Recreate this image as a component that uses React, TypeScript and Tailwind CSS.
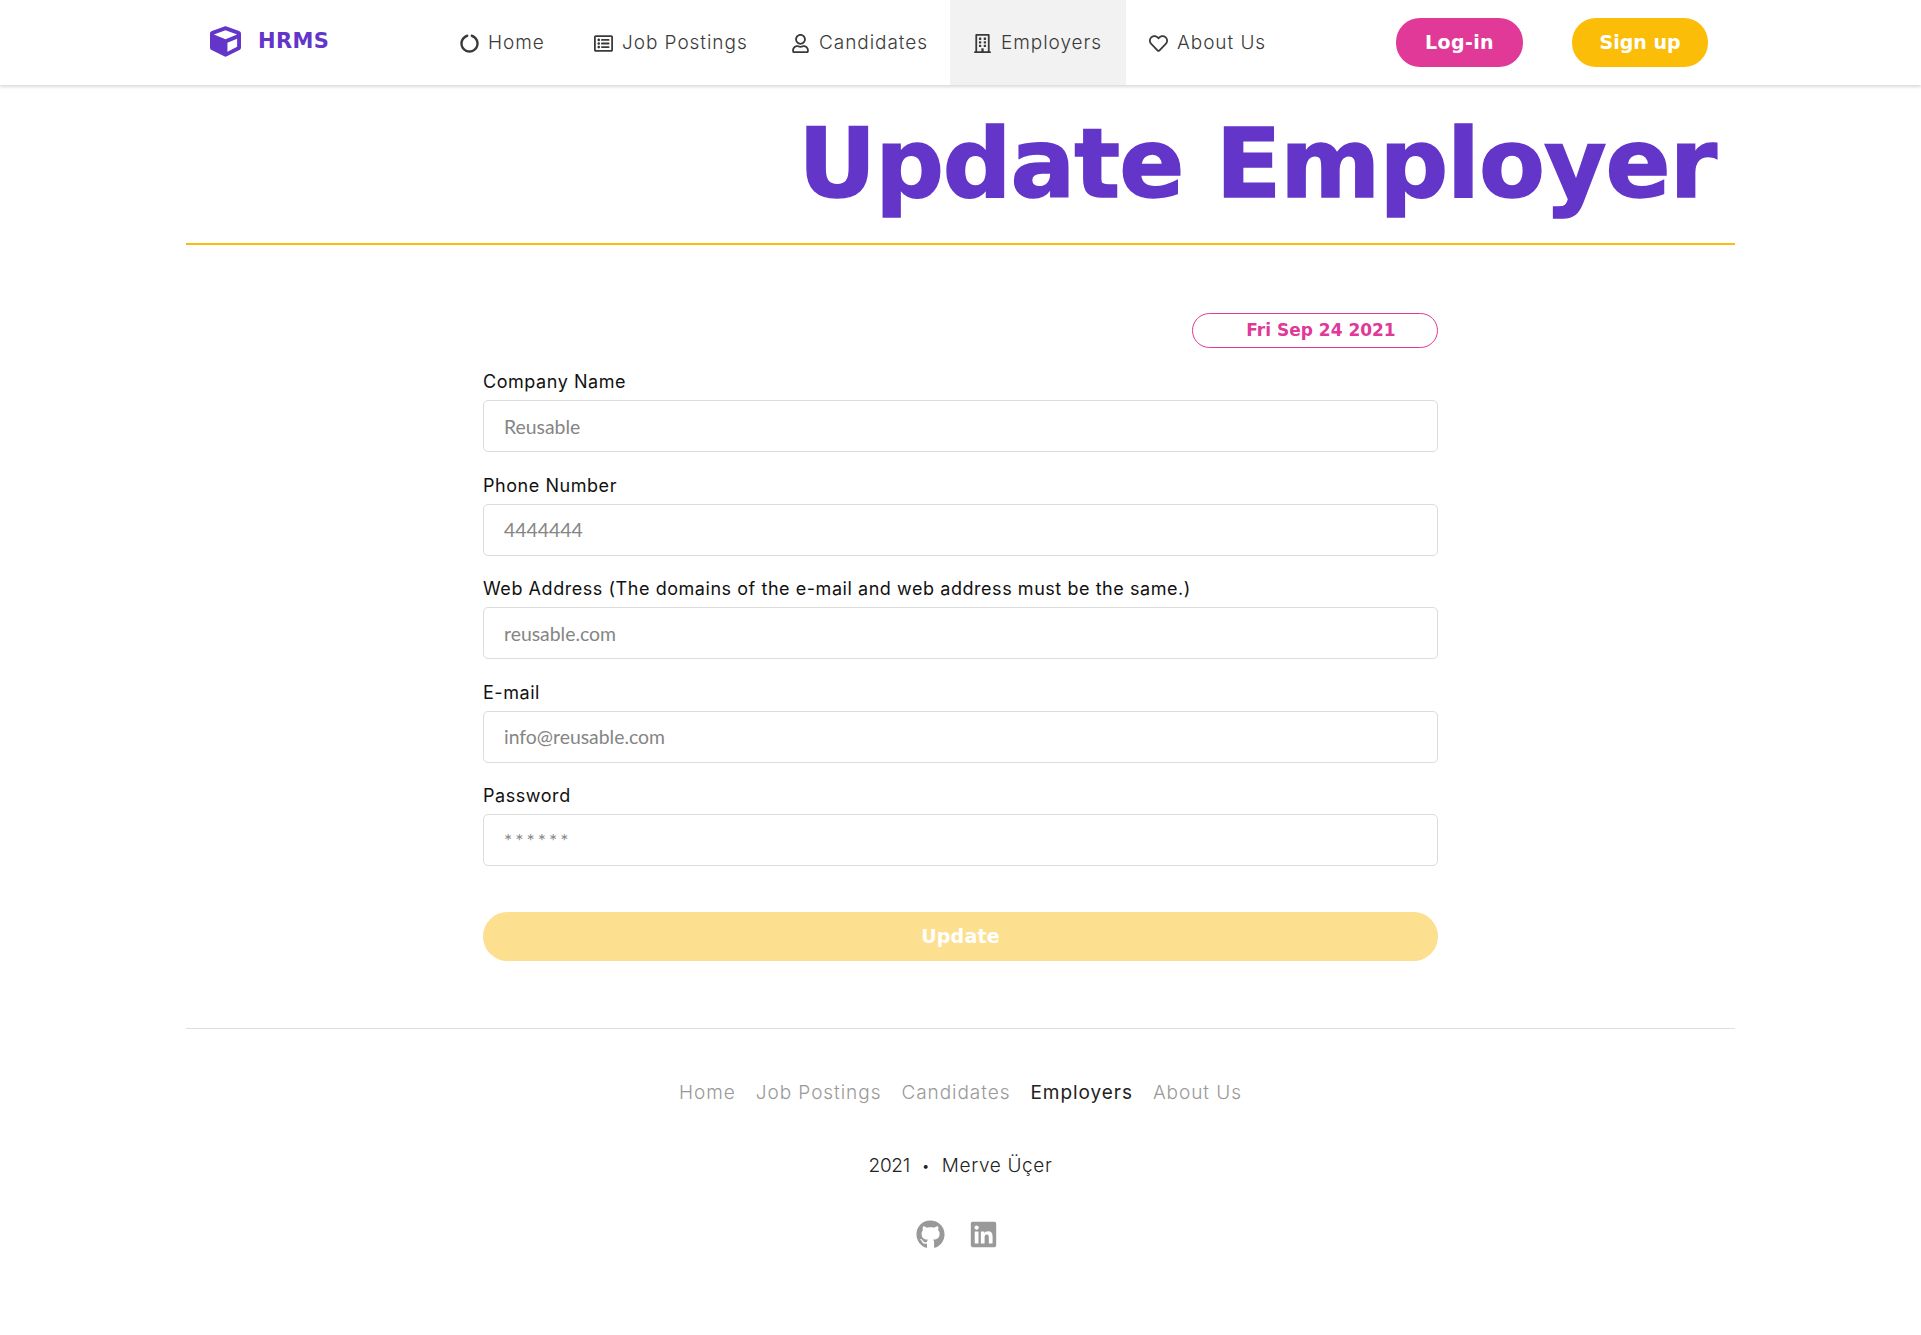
import { FaCube, FaRegListAlt, FaRegUser, FaRegBuilding, FaRegHeart, FaCircleNotch, FaGithub, FaLinkedin } from "react-icons/fa"

const body = "font-['Inter','Liberation_Sans',sans-serif]"
const display = "font-['DejaVu_Sans','Liberation_Sans',sans-serif]"

const navItems = [
  { label: "Home", icon: FaCircleNotch, width: "w-[134px]" },
  { label: "Job Postings", icon: FaRegListAlt, width: "w-[197px]" },
  { label: "Candidates", icon: FaRegUser, width: "w-[182px]" },
  { label: "Employers", icon: FaRegBuilding, width: "w-[176px]", active: true },
  { label: "About Us", icon: FaRegHeart, width: "w-[164px]" },
]

const fields = [
  { label: "Company Name", placeholder: "Reusable" },
  { label: "Phone Number", placeholder: "4444444" },
  { label: "Web Address (The domains of the e-mail and web address must be the same.)", placeholder: "reusable.com" },
  { label: "E-mail", placeholder: "info@reusable.com" },
  { label: "Password", placeholder: "******", spaced: true },
]

export default function App() {
  return (
    <div className={`min-h-[1335px] bg-white ${body}`}>
      {/* Navbar */}
      <header className="h-[85px] bg-white shadow-[0_2px_3px_0_rgba(0,0,0,0.15)]">
        <div className="flex h-full pl-[210px]">
          <div className="flex w-[227px] items-center pb-[2px]">
            <FaCube className="text-[31px] text-[#6435c9]" />
            <span className={`ml-[17px] text-[21px] font-bold tracking-[0.4px] text-[#6435c9] ${display}`}>HRMS</span>
          </div>
          <nav className="flex">
            {navItems.map((item) => (
              <a
                key={item.label}
                className={`flex items-center pt-[1px] pl-[23px] text-[19px] font-light tracking-[0.95px] text-[#3a3a3a] ${item.width} ${item.active ? "bg-[#f2f2f2]" : ""}`}
              >
                <item.icon className="mr-[9px] shrink-0 text-[19px]" />
                {item.label}
              </a>
            ))}
          </nav>
          <div className={`ml-[106px] flex items-center gap-[49px] text-[19px] font-bold text-white ${display}`}>
            <button className="h-[49px] w-[127px] rounded-[24px] bg-[#e03997] tracking-[0.4px]">Log-in</button>
            <button className="h-[49px] w-[136px] rounded-[24px] bg-[#fbbd08]">Sign up</button>
          </div>
        </div>
      </header>

      <main className="mx-auto w-[1549px]">
        {/* Title */}
        <div className="flex h-[160px] items-center justify-end border-b-2 border-[#fbbd08] pr-[19px]">
          <h1 className={`text-[96px] leading-none font-bold tracking-[-1px] whitespace-nowrap text-[#6435c9] [-webkit-text-stroke:1.5px_#6435c9] ${display}`}>Update Employer</h1>
        </div>

        {/* Form */}
        <form className="mx-auto mt-[68px] w-[955px]">
          <div className="flex justify-end">
            <div className={`flex h-[35px] w-[246px] items-center justify-center rounded-[18px] border border-[#e03997] pl-[12px] text-[17px] font-bold text-[#e03997] ${display}`}>
              Fri Sep 24 2021
            </div>
          </div>
          <div className="mt-[23px] flex flex-col gap-[22.5px]">
            {fields.map((field) => (
              <div key={field.label}>
                <label className="mb-[8px] block text-[18px] leading-[21px] tracking-[0.55px] text-[#111]">{field.label}</label>
                <input
                  readOnly
                  placeholder={field.placeholder}
                  className={`block h-[52px] w-full rounded-[5px] border border-[#dcdcdc] bg-white px-[20px] font-['Lato',sans-serif] text-[19.4px] placeholder:text-[#858585] ${field.spaced ? "placeholder:tracking-[3px]" : ""}`}
                />
              </div>
            ))}
          </div>
          <button
            type="button"
            className={`mt-[46px] h-[49px] w-full rounded-[25px] bg-[#fddf90] text-[19px] font-bold tracking-[0.2px] text-white ${display}`}
          >
            Update
          </button>
        </form>

        <div className="mt-[67px] h-px bg-[#dedede]" />

        {/* Footer */}
        <footer className="flex flex-col items-center">
          <div className="mt-[52px] flex gap-[20px] text-[19px] leading-[24px] font-light tracking-[0.95px] text-[#999]">
            <a>Home</a>
            <a>Job Postings</a>
            <a>Candidates</a>
            <a className="font-normal text-[#222]">Employers</a>
            <a>About Us</a>
          </div>
          <div className="mt-[49px] flex items-center text-[19px] leading-[24px] font-light text-[#222]">
            <span className="tracking-[-0.3px]">2021</span>
            <span className="mx-[12px] text-[14px]">•</span>
            <span className="tracking-[0.65px]">Merve Üçer</span>
          </div>
          <div className="mt-[42px] flex items-center gap-[24px] pr-[7px] text-[#999]">
            <FaGithub className="text-[29px]" />
            <FaLinkedin className="text-[29px]" />
          </div>
        </footer>
      </main>
    </div>
  )
}
